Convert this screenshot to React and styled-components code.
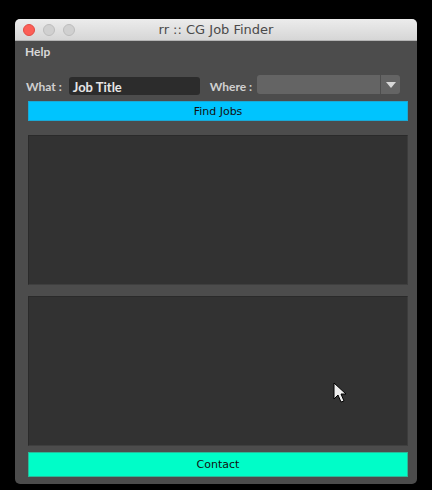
import React from "react";
import styled, { createGlobalStyle } from "styled-components";

const Global = createGlobalStyle`
  html, body {
    margin: 0;
    padding: 0;
    background: #000;
    width: 432px;
    height: 490px;
    overflow: hidden;
  }
`;

const Screen = styled.div`
  position: relative;
  padding: 19px 0 0 15px;
  font-family: "DejaVu Sans", "Liberation Sans", sans-serif;
`;

const Window = styled.div`
  width: 402px;
  height: 465px;
  background: #4c4c4c;
  border-radius: 5px;
  overflow: hidden;
  display: flex;
  flex-direction: column;
`;

const TitleBar = styled.div`
  height: 22px;
  background: linear-gradient(#ececec, #d6d6d6);
  border-bottom: 1px solid #b4b4b4;
  display: flex;
  align-items: center;
  position: relative;
  padding-left: 8px;
  gap: 8px;
`;

const Light = styled.span`
  width: 12px;
  height: 12px;
  border-radius: 50%;
  box-sizing: border-box;
  background: ${(p) => (p.red ? "#fc5f57" : "#d0d0d0")};
  border: 1px solid ${(p) => (p.red ? "#e04a43" : "#bcbcbc")};
`;

const Title = styled.div`
  position: absolute;
  left: 0;
  right: 0;
  text-align: center;
  font-size: 13px;
  color: #4a4a4a;
  pointer-events: none;
`;

const MenuBar = styled.div`
  padding: 3px 10px 0;
  height: 19px;
  font-family: Lato, "Liberation Sans", sans-serif;
  font-size: 12px;
  font-weight: bold;
  color: #d8d8d8;
`;

const Body = styled.div`
  padding: 12px 9px 7px 13px;
  display: flex;
  flex-direction: column;
  flex: 1;
`;

const FormRow = styled.div`
  display: flex;
  align-items: center;
  height: 22px;
  margin-left: -2px;
  white-space: nowrap;
  font-family: Lato, "Liberation Sans", sans-serif;
`;

const Label = styled.span`
  font-size: 12px;
  font-weight: bold;
  color: #d0d0d0;
  flex-shrink: 0;
  margin-right: ${(p) => p.gap}px;
`;

const TextBox = styled.div`
  width: 131px;
  height: 18px;
  flex-shrink: 0;
  background: #2c2c2c;
  border-radius: 3px;
  color: #e6e6e6;
  font-size: 13px;
  font-weight: bold;
  line-height: 21px;
  padding-left: 4px;
  box-sizing: border-box;
  margin-right: 10px;
`;

const Combo = styled.div`
  width: 143px;
  height: 19px;
  flex-shrink: 0;
  background: #646464;
  border-radius: 3px;
  display: flex;
  justify-content: flex-end;
  margin-top: -3px;
`;

const ComboArrow = styled.div`
  width: 19px;
  border-left: 1px solid #4e4e4e;
  display: flex;
  align-items: center;
  justify-content: center;
`;

const Button = styled.div`
  height: ${(p) => p.h}px;
  background: ${(p) => p.color};
  color: #111;
  font-size: 11px;
  display: flex;
  align-items: center;
  justify-content: center;
  box-sizing: border-box;
  border: 1px solid ${(p) => p.edge};
`;

const Panel = styled.div`
  height: 150px;
  background: #323232;
  border: 1px solid #2a2a2a;
  border-right-color: #3c3c3c;
  border-bottom-color: #3f3f3f;
  box-sizing: border-box;
`;

const Stack = styled.div`
  display: flex;
  flex-direction: column;
  gap: ${(p) => p.gap}px;
  margin-top: ${(p) => p.top}px;
`;

const Cursor = styled.svg`
  position: absolute;
  left: 333px;
  top: 382px;
`;

export default function App() {
  return (
    <Screen>
      <Global />
      <Window>
        <TitleBar>
          <Light red />
          <Light />
          <Light />
          <Title>rr :: CG Job Finder</Title>
        </TitleBar>
        <MenuBar>Help</MenuBar>
        <Body>
          <FormRow>
            <Label gap={7}>What :</Label>
            <TextBox>Job Title</TextBox>
            <Label gap={5}>Where :</Label>
            <Combo>
              <ComboArrow>
                <svg width="10" height="6" viewBox="0 0 10 6">
                  <path d="M0 0 H10 L5 6 Z" fill="#d8d8d8" />
                </svg>
              </ComboArrow>
            </Combo>
          </FormRow>
          <Stack gap={0} top={4}>
            <Button h={20} color="#00c4fe" edge="#1aa9d6">Find Jobs</Button>
          </Stack>
          <Stack gap={11} top={14}>
            <Panel />
            <Panel />
          </Stack>
          <Stack gap={0} top={6}>
            <Button h={25} color="#00fdc8" edge="#2ab898">Contact</Button>
          </Stack>
        </Body>
      </Window>
      <Cursor width="16" height="24" viewBox="0 0 16 24">
        <path
          d="M1 1 L1 17 L5 13 L8 20 L11 19 L8 12 L13 12 Z"
          fill="#eee"
          stroke="#000"
          strokeWidth="1"
          strokeLinejoin="round"
        />
      </Cursor>
    </Screen>
  );
}
